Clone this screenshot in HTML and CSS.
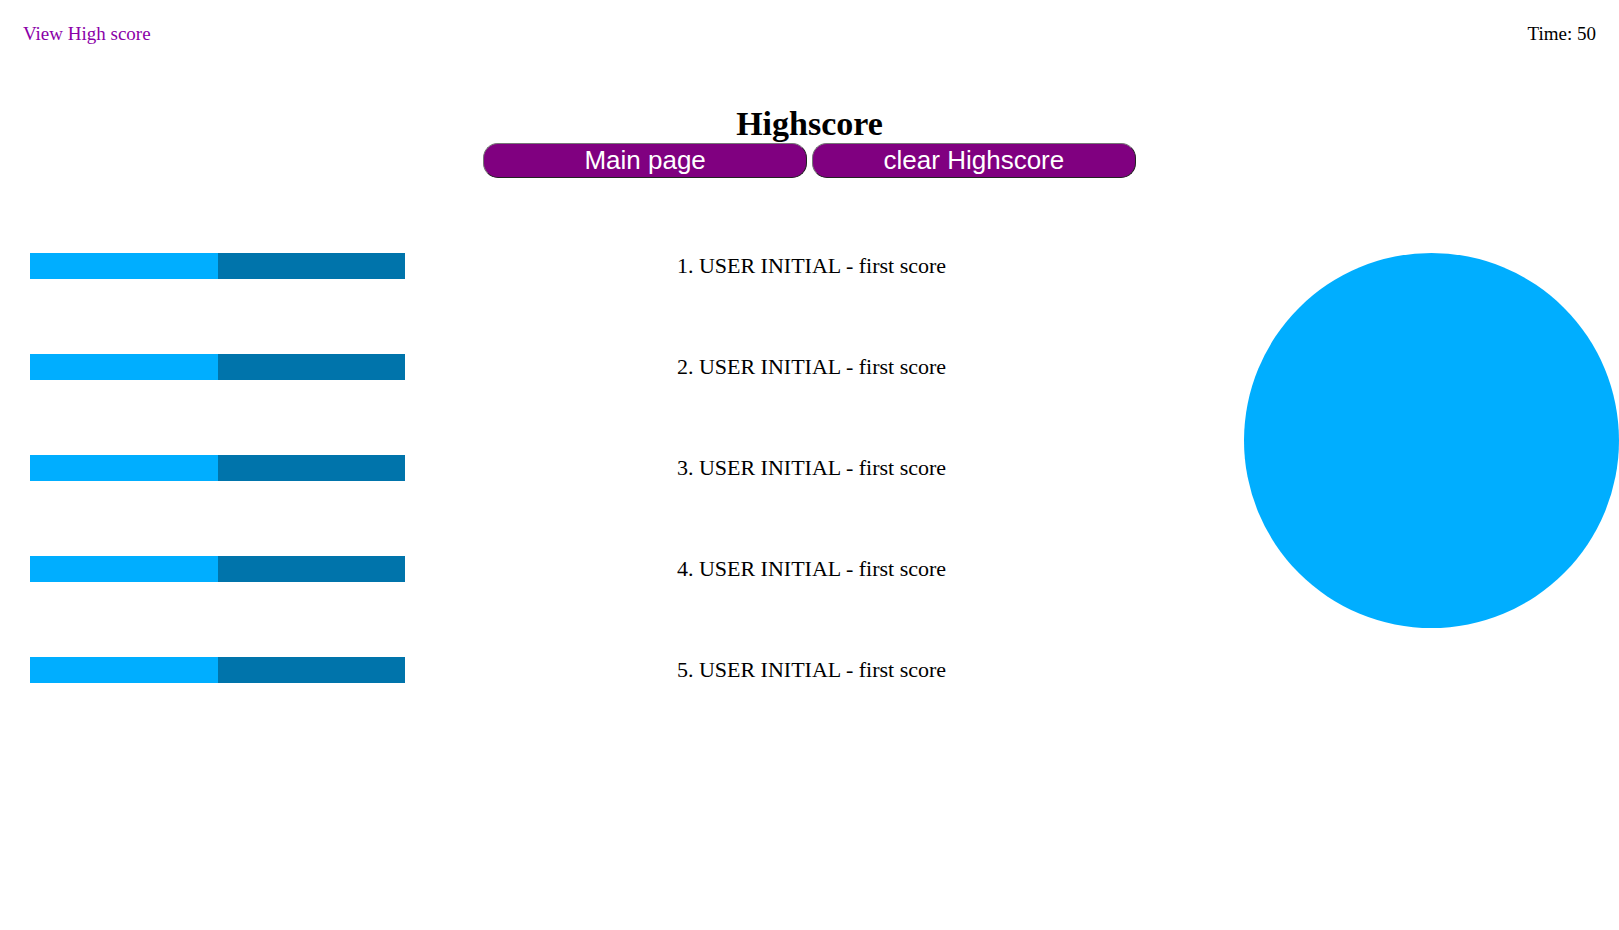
FILE: index.html
```html
<!DOCTYPE html>
<html lang="en">
<head>
<meta charset="utf-8">
<title>Highscore</title>
<link rel="stylesheet" href="styles.css">
</head>
<body>
<header class="topbar">
  <a class="score-link" href="#scores">View High score</a>
  <span>Time: 50</span>
</header>
<main>
  <section class="intro">
    <h1 class="title">Highscore</h1>
    <div class="actions">
      <button class="button" type="button">Main page</button>
      <button class="button" type="button">clear Highscore</button>
    </div>
  </section>
  <section class="board" id="scores">
    <div class="bars">
      <div class="bar"><div class="bar-fill"></div></div>
      <div class="bar"><div class="bar-fill"></div></div>
      <div class="bar"><div class="bar-fill"></div></div>
      <div class="bar"><div class="bar-fill"></div></div>
      <div class="bar"><div class="bar-fill"></div></div>
    </div>
    <ol class="scores">
      <li>USER INITIAL - first score</li>
      <li>USER INITIAL - first score</li>
      <li>USER INITIAL - first score</li>
      <li>USER INITIAL - first score</li>
      <li>USER INITIAL - first score</li>
    </ol>
    <div class="circle"></div>
  </section>
</main>
</body>
</html>
```
FILE: styles.css
```css
* {
  box-sizing: border-box;
}

body {
  margin: 0;
  background: #fff;
  color: #000;
  font-family: "Liberation Serif", "Times New Roman", serif;
}

.topbar {
  display: flex;
  justify-content: space-between;
  padding: 24px 23px;
  font-size: 19px;
  line-height: 20px;
}

.score-link {
  color: #8b00a8;
  text-decoration: none;
}

.intro {
  padding-top: 36px;
  text-align: center;
}

.title {
  margin: 0;
  font-size: 34px;
  line-height: 39px;
}

.actions {
  display: flex;
  justify-content: center;
  gap: 5px;
}

.button {
  width: 20%;
  padding: 1px 6px;
  border: 1px solid;
  border-color: #767676 #212121 #212121 #767676;
  border-radius: 15px;
  background: #800080;
  color: #fff;
  font-family: "Liberation Sans", Arial, sans-serif;
  font-size: 26px;
  line-height: 31px;
}

.board {
  display: grid;
  grid-template-columns: 1fr auto 1fr;
  align-items: start;
  padding-top: 75px;
}

.bars,
.scores {
  display: grid;
  gap: 75px;
  margin: 0;
}

.bars {
  padding-left: 30px;
}

.bar {
  width: 375px;
  height: 26px;
  background: #0074ab;
}

.bar-fill {
  width: 50%;
  height: 100%;
  background: #00aeff;
}

.scores {
  padding-left: 26px;
  font-size: 22px;
  line-height: 26px;
}

.circle {
  justify-self: end;
  width: 375px;
  height: 375px;
  border-radius: 50%;
  background: #00aeff;
}
```
